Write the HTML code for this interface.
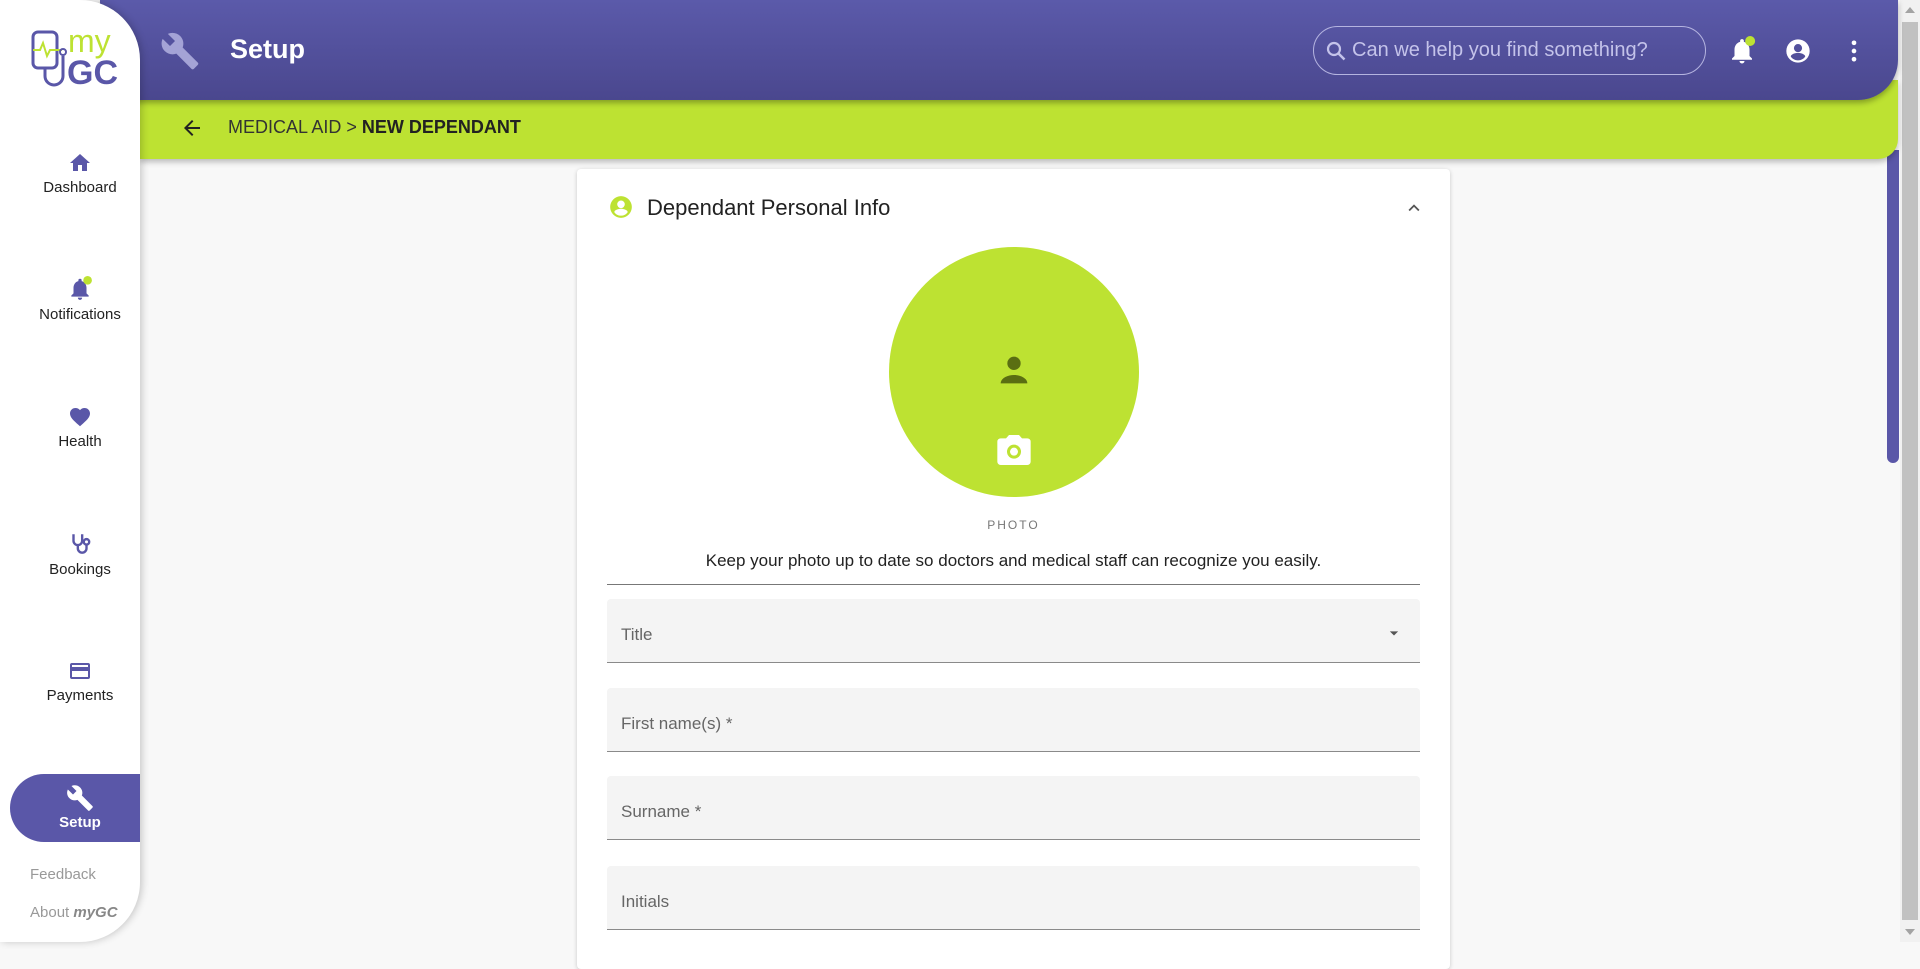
<!DOCTYPE html>
<html><head><meta charset="utf-8">
<style>
*{box-sizing:border-box;margin:0;padding:0}
body{width:1920px;height:942px;overflow:hidden;background:#f8f8f8;font-family:"Liberation Sans",sans-serif;position:relative}
.side{position:absolute;left:0;top:0;width:140px;height:942px;background:#fff;border-radius:0 60px 60px 0;box-shadow:2px 0 8px rgba(0,0,0,.2);z-index:5}
.nav{position:absolute;left:10px;width:140px;text-align:center;font-size:15px;color:#222}
.nav svg{display:block;margin:0 auto 4px}
.hdr{position:absolute;left:100px;top:0;width:1798px;height:100px;background:linear-gradient(#5b5aaa,#4a478e);border-radius:0 0 40px 0;z-index:3;box-shadow:0 3px 6px rgba(0,0,0,.3)}
.grn{position:absolute;left:140px;top:80px;width:1758px;height:79px;background:#bde232;border-radius:0 0 20px 0;z-index:2;box-shadow:0 3px 6px rgba(0,0,0,.25)}
.card{position:absolute;left:577px;top:169px;width:873px;height:800px;background:#fff;box-shadow:0 1px 4px rgba(0,0,0,.2);border-radius:4px}
.fld{position:absolute;left:30px;width:813px;height:64px;background:#f4f4f4;border-bottom:1px solid #8a8a8a;border-radius:4px 4px 0 0;font-size:17px;color:#666;padding:26px 0 0 14px}
</style></head><body>
<div class="side">
  <svg style="position:absolute;left:30px;top:24px" width="94" height="64" viewBox="0 0 94 64">
    <rect x="3" y="8" width="24" height="36" rx="5" fill="none" stroke="#5a57a8" stroke-width="3"/>
    <path d="M3 26h7l3-7 4 13 3-6h12" fill="none" stroke="#bde232" stroke-width="2"/>
    <path d="M15 44v8a9 9 0 0 0 18 0v-20" fill="none" stroke="#5a57a8" stroke-width="3"/>
    <circle cx="33" cy="28" r="3" fill="none" stroke="#5a57a8" stroke-width="2"/>
    <text x="38" y="28" font-family="Liberation Sans" font-size="32" fill="#bde232">my</text>
    <text x="37" y="60" font-family="Liberation Sans" font-weight="bold" font-size="34" fill="#5a57a8">GC</text>
  </svg>
  <div class="nav" style="top:151px"><svg width="26" height="24" viewBox="0 0 24 24"><path d="M10 20v-6h4v6h5v-8h3L12 3 2 12h3v8z" fill="#5a57a8"/></svg>Dashboard</div>
  <div class="nav" style="top:276px"><svg width="26" height="26" viewBox="0 0 24 24"><path d="M12 22a2 2 0 0 0 2-2h-4a2 2 0 0 0 2 2zm6-6v-5c0-3-1.6-5.6-4.5-6.3V4a1.5 1.5 0 0 0-3 0v.7C7.6 5.4 6 8 6 11v5l-2 2v1h16v-1z" fill="#5a57a8"/><circle cx="19" cy="4" r="4" fill="#bde232"/></svg>Notifications</div>
  <div class="nav" style="top:405px"><svg width="26" height="24" viewBox="0 0 24 24"><path d="M12 21.3l-1.4-1.3C5.4 15.4 2 12.3 2 8.5 2 5.4 4.4 3 7.5 3c1.7 0 3.4.8 4.5 2.1C13.1 3.8 14.8 3 16.5 3 19.6 3 22 5.4 22 8.5c0 3.8-3.4 6.9-8.6 11.5z" fill="#5a57a8"/></svg>Health</div>
  <div class="nav" style="top:531px"><svg width="26" height="26" viewBox="0 0 24 24" fill="none" stroke="#5a57a8" stroke-width="2.2"><path d="M6 3v6a4 4 0 0 0 8 0V3M10 13v3a4 4 0 0 0 8 0v-3"/><circle cx="18" cy="10" r="2.5"/></svg>Bookings</div>
  <div class="nav" style="top:659px"><svg width="26" height="24" viewBox="0 0 24 24"><path d="M20 4H4a2 2 0 0 0-2 2v12a2 2 0 0 0 2 2h16a2 2 0 0 0 2-2V6a2 2 0 0 0-2-2zm0 14H4v-6h16zm0-10H4V6h16z" fill="#5a57a8"/></svg>Payments</div>
  <div style="position:absolute;left:10px;top:774px;width:130px;height:68px;background:#5a57a8;border-radius:34px 0 0 34px;color:#fff;text-align:center;font-size:15px;font-weight:bold;padding-top:10px;padding-left:10px"><svg width="28" height="28" viewBox="0 0 24 24" style="display:block;margin:0 auto 2px"><path d="M22.7 19l-9.1-9.1c.9-2.3.4-5-1.5-6.9-2-2-5-2.4-7.4-1.3L9 6 6 9 1.6 4.7C.4 7.1.9 10.1 2.9 12.1c1.9 1.9 4.6 2.4 6.9 1.5l9.1 9.1c.4.4 1 .4 1.4 0l2.3-2.3c.5-.4.5-1.1.1-1.4z" fill="#fff"/></svg>Setup</div>
  <div style="position:absolute;left:30px;top:866px;font-size:15px;color:#999">Feedback</div>
  <div style="position:absolute;left:30px;top:904px;font-size:15px;color:#999">About <b><i style="color:#888">myGC</i></b></div>
</div>
<div class="hdr">
  <svg style="position:absolute;left:60px;top:31px" width="40" height="40" viewBox="0 0 24 24"><path d="M22.7 19l-9.1-9.1c.9-2.3.4-5-1.5-6.9-2-2-5-2.4-7.4-1.3L9 6 6 9 1.6 4.7C.4 7.1.9 10.1 2.9 12.1c1.9 1.9 4.6 2.4 6.9 1.5l9.1 9.1c.4.4 1 .4 1.4 0l2.3-2.3c.5-.4.5-1.1.1-1.4z" fill="#a4a3d6"/></svg>
  <div style="position:absolute;left:130px;top:34px;color:#fff;font-size:27px;font-weight:bold">Setup</div>
  <div style="position:absolute;left:1213px;top:26px;width:393px;height:49px;border:1px solid #b5b4e0;border-radius:25px;color:#c4c3ea;font-size:20px;padding:12px 0 0 38px">
    <svg style="position:absolute;left:10px;top:12px" width="24" height="24" viewBox="0 0 24 24"><circle cx="10" cy="10" r="6" fill="none" stroke="#c4c3ea" stroke-width="2.2"/><path d="M14.5 14.5l6 6" stroke="#c4c3ea" stroke-width="2.5"/></svg>Can we help you find something?</div>
  <svg style="position:absolute;left:1627px;top:36px" width="30" height="30" viewBox="0 0 24 24"><path d="M12 22a2 2 0 0 0 2-2h-4a2 2 0 0 0 2 2zm6-6v-5c0-3-1.6-5.6-4.5-6.3V4a1.5 1.5 0 0 0-3 0v.7C7.6 5.4 6 8 6 11v5l-2 2v1h16v-1z" fill="#fff"/><circle cx="18.5" cy="4" r="4" fill="#bde232"/></svg>
  <svg style="position:absolute;left:1684px;top:37px" width="28" height="28" viewBox="0 0 24 24"><path d="M12 2a10 10 0 1 0 0 20 10 10 0 0 0 0-20zm0 4a3.5 3.5 0 1 1 0 7 3.5 3.5 0 0 1 0-7zm0 14c-2.6 0-4.9-1.3-6.2-3.3 0-2 4.1-3.1 6.2-3.1s6.2 1.1 6.2 3.1C16.9 18.7 14.6 20 12 20z" fill="#fff"/></svg>
  <svg style="position:absolute;left:1740px;top:37px" width="28" height="28" viewBox="0 0 24 24"><circle cx="12" cy="5" r="2" fill="#fff"/><circle cx="12" cy="12" r="2" fill="#fff"/><circle cx="12" cy="19" r="2" fill="#fff"/></svg>
</div>
<div class="grn">
  <svg style="position:absolute;left:40px;top:36px" width="24" height="24" viewBox="0 0 24 24"><path d="M20 11H7.8l5.6-5.6L12 4l-8 8 8 8 1.4-1.4L7.8 13H20z" fill="#222"/></svg>
  <div style="position:absolute;left:88px;top:37px;font-size:18px;color:#333">MEDICAL AID &gt; <b style="color:#222">NEW DEPENDANT</b></div>
</div>
<div class="card">
  <svg style="position:absolute;left:31px;top:25px" width="26" height="26" viewBox="0 0 24 24"><path d="M12 2a10 10 0 1 0 0 20 10 10 0 0 0 0-20zm0 4a3.5 3.5 0 1 1 0 7 3.5 3.5 0 0 1 0-7zm0 14c-2.6 0-4.9-1.3-6.2-3.3 0-2 4.1-3.1 6.2-3.1s6.2 1.1 6.2 3.1C16.9 18.7 14.6 20 12 20z" fill="#bde232"/></svg>
  <div style="position:absolute;left:70px;top:26px;font-size:22px;color:#222">Dependant Personal Info</div>
  <svg style="position:absolute;left:826px;top:28px" width="22" height="22" viewBox="0 0 24 24"><path d="M7.4 15.4L12 10.8l4.6 4.6L18 14l-6-6-6 6z" fill="#555"/></svg>
  <div style="position:absolute;left:312px;top:78px;width:250px;height:250px;border-radius:50%;background:#bde232"></div>
  <svg style="position:absolute;left:417px;top:181px" width="40" height="40" viewBox="0 0 24 24"><circle cx="12" cy="8" r="4" fill="#5a6e12"/><path d="M4 20c0-3 4-5 8-5s8 2 8 5z" fill="#5a6e12"/></svg>
  <svg style="position:absolute;left:417px;top:261px" width="40" height="40" viewBox="0 0 24 24"><path d="M9 3L7.2 5H4a2 2 0 0 0-2 2v12a2 2 0 0 0 2 2h16a2 2 0 0 0 2-2V7a2 2 0 0 0-2-2h-3.2L15 3z" fill="#fff"/><circle cx="12" cy="13" r="4.2" fill="#bde232"/><circle cx="12" cy="13" r="2.4" fill="#fff"/></svg>
  <div style="position:absolute;left:0;width:873px;top:349px;text-align:center;font-size:12px;letter-spacing:2px;color:#777">PHOTO</div>
  <div style="position:absolute;left:0;width:873px;top:382px;text-align:center;font-size:17px;color:#222">Keep your photo up to date so doctors and medical staff can recognize you easily.</div>
  <div style="position:absolute;left:30px;top:415px;width:813px;border-top:1px solid #777"></div>
  <div class="fld" style="top:430px">Title<svg style="position:absolute;right:16px;top:24px" width="20" height="20" viewBox="0 0 24 24"><path d="M7 10l5 5 5-5z" fill="#555"/></svg></div>
  <div class="fld" style="top:519px">First name(s) *</div>
  <div class="fld" style="top:607px">Surname *</div>
  <div class="fld" style="top:697px">Initials</div>
</div>
<div style="position:absolute;left:1887px;top:150px;width:12px;height:313px;background:#5a57a8;border-radius:0 0 6px 6px"></div>
<div style="position:absolute;left:1900px;top:0;width:20px;height:942px;background:#f1f1f1">
  <div style="position:absolute;left:2px;top:22px;width:16px;height:898px;background:#c1c1c1"></div>
  <svg style="position:absolute;left:5px;top:6px" width="10" height="8"><path d="M0 7L5 1 10 7z" fill="#a3a3a3"/></svg>
  <svg style="position:absolute;left:5px;top:928px" width="10" height="8"><path d="M0 1L5 7 10 1z" fill="#a3a3a3"/></svg>
</div>
</body></html>
